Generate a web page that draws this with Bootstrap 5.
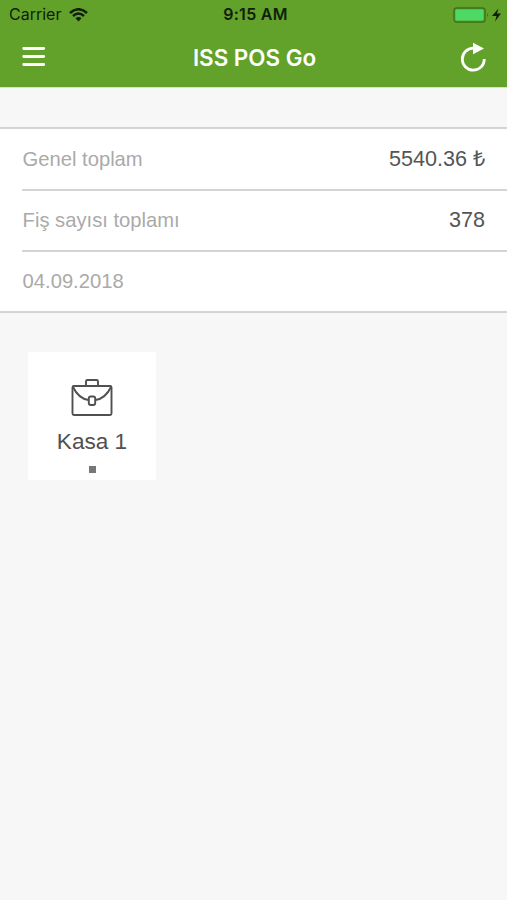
<!DOCTYPE html>
<html lang="tr">
<head>
<meta charset="utf-8">
<meta name="viewport" content="width=device-width, initial-scale=1">
<title>ISS POS Go</title>
<link href="https://cdn.jsdelivr.net/npm/bootstrap@5.3.0/dist/css/bootstrap.min.css" rel="stylesheet">
<style>
body { background: #f7f7f7; font-family: "Liberation Sans", Arial, sans-serif; min-height: 900px; }
.app-header { background: #62a22b; height: 88px; border-bottom: 1px solid #d3e3c3; font-family: Inter, sans-serif; }
.status-bar { height: 29px; padding: 0 5px 0 9px; color: #10200a; font-size: 16px; line-height: 29px; }
.status-bar > div, .title-bar > div { flex: 1 1 0; }
.clock { font-weight: 600; font-size: 16px; letter-spacing: .3px; }
.title-bar { height: 56px; padding: 0 20px 0 22px; }
.title-bar h1 { font-size: 22.4px; font-weight: 600; line-height: 56px; padding-top: 1px; }
.summary { margin-top: 39px; background: #fff; border-top: 2px solid #d4d4d4; border-bottom: 2px solid #d4d4d4; }
.summary .list-group-item { margin-left: 22px; padding: 0 22px 0 .6px; height: 61.5px; border-color: #d4d4d4; border-width: 0 0 2px; color: #aaa; font-size: 20.2px; }
.summary .list-group-item:last-child { height: 59px; padding-bottom: 1px; border-bottom: 0; }
.summary .amount { color: #555; font-size: 21.6px; }
.register { width: 128px; height: 128px; margin: 39px 0 0 28px; color: #505050; font-size: 22.6px; padding-top: 26px; }
.caption-text { margin: 13px 0 12px; }
.dot { width: 7px; height: 7px; background: #777; }
</style>
</head>
<body>
<header class="app-header">
  <div class="status-bar d-flex align-items-center">
    <div class="d-flex align-items-center"><span>Carrier</span>
      <svg class="ms-2" width="19" height="14" viewBox="0 0 19 14" fill="none" stroke="#10200a" stroke-width="2.500"><path d="M1 5Q9.500-2.500 18 5M4 8Q9.500 3 15 8"/><path d="M6.500 10.300Q9.500 7.700 12.500 10.300L9.500 13.500Z" fill="#10200a" stroke="none"/></svg>
    </div>
    <span class="clock">9:15 AM</span>
    <div class="d-flex align-items-center justify-content-end">
      <svg width="49" height="18" viewBox="0 0 49 18"><rect x="1" y="2" width="31" height="14" rx="2.500" fill="none" stroke="#3c731c" stroke-width="1.400"/><rect x="2.500" y="3.500" width="28" height="11" rx="1" fill="#4cd964"/><path d="M34 7q2 2 0 4z" fill="#3c731c"/><path d="M45.500 2.500L39 10h4.500l-1.500 5.500L48 7.500h-4z" fill="#10200a"/></svg>
    </div>
  </div>
  <div class="title-bar d-flex align-items-center">
    <div><svg class="d-block" width="24" height="22" viewBox="0 0 24 22" stroke="#fff" stroke-width="2.800" stroke-linecap="round"><path d="M1.700 2.500h20M1.700 10.500h20M1.700 18.500h20"/></svg></div>
    <h1 class="mb-0 text-white">ISS POS Go</h1>
    <div><svg class="d-block ms-auto" width="27" height="30" viewBox="0 0 27 30"><path d="M13.500 6.200A11 11 0 1 0 24.300 17" fill="none" stroke="#fff" stroke-width="2.800"/><path d="M13 .8L24 6.500 13 12.300z" fill="#fff"/></svg></div>
  </div>
</header>
<main>
  <ul class="summary list-group list-group-flush rounded-0">
    <li class="list-group-item d-flex align-items-center justify-content-between"><span>Genel toplam</span><span class="amount">5540.36 ₺</span></li>
    <li class="list-group-item d-flex align-items-center justify-content-between"><span>Fiş sayısı toplamı</span><span class="amount">378</span></li>
    <li class="list-group-item d-flex align-items-center"><span>04.09.2018</span></li>
  </ul>
  <div class="register bg-white d-flex flex-column align-items-center">
    <svg width="44" height="40" viewBox="0 0 44 40" fill="none" stroke="#505050" stroke-width="1.900"><rect x="2.500" y="8" width="39" height="29" rx="1.500"/><path d="M16 8V3.500Q16 2 17.500 2h9Q28 2 28 3.500V8M3 9Q8.500 20.500 18.500 22M41 9Q35.500 20.500 25.500 22"/><rect x="18.800" y="18.500" width="6.400" height="8.500" rx="2"/></svg>
    <span class="caption-text lh-1">Kasa 1</span>
    <span class="dot"></span>
  </div>
</main>
<script src="https://cdn.jsdelivr.net/npm/bootstrap@5.3.0/dist/js/bootstrap.bundle.min.js"></script>
</body>
</html>
